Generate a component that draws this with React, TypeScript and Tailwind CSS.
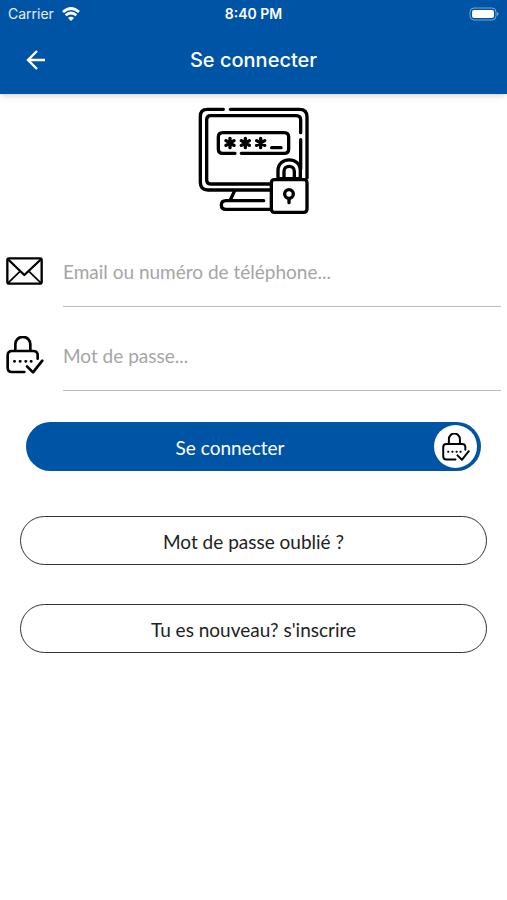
import React from 'react';

interface Field {
    id: string;
    type: string;
    placeholder: string;
    icon: React.ReactNode;
}

const LockCheckIcon: React.FC<{ className?: string }> = ({ className }) => (
    <svg className={className} viewBox="20 272 112 114" fill="none" stroke="black" strokeWidth="8" strokeLinecap="round" strokeLinejoin="round" aria-hidden="true">
        <path d="M47 315v-18a22 22 0 0 1 45 0v18" />
        <path d="M74 380H37q-13 0-13-13v-37q0-13 13-13h64q13 0 13 13v10" />
        <path d="M82 363l18 18 28-35" />
        <path d="M44 348h1M61 348h1M78 348h1M94 348h1" />
    </svg>
);

const MailIcon: React.FC = () => (
    <svg className="h-7 w-[37px]" viewBox="21 33 111 84" fill="none" stroke="black" strokeWidth="7" strokeLinejoin="round" aria-hidden="true">
        <rect x="25" y="37" width="103" height="76" rx="5" />
        <path d="M26 39l50 48 51-48" />
        <path d="M26 112l37-36M127 112L90 76" strokeWidth="5" />
    </svg>
);

const ComputerIcon: React.FC = () => (
    <svg className="h-[107px] w-[111px]" viewBox="25 27 333 321" fill="none" stroke="black" strokeWidth="10" strokeLinecap="round" strokeLinejoin="round" aria-hidden="true">
        {/* screen */}
        <path d="M101 34H53q-21 0-21 21v198q0 23 23 23h185" />
        <path d="M122 34h207q23 0 23 22v184" />
        <path d="M333 104V66q0-13-13-13H63q-12 0-12 12v181q0 12 12 12h176" />
        <path d="M333 125v88" />
        {/* stand */}
        <path d="M134 280l-12 26M222 308H109q-14 0-14 13t14 13h130" />
        {/* password box */}
        <path d="M136 166h-37q-13 0-13-13v-36q0-13 13-13h185q13 0 13 13v36q0 13-13 13H155" />
        <path d="M121 121v28M109 128l24 14M133 128l-24 14M167 121v28M155 128l24 14M179 128l-24 14M213 121v28M201 128l24 14M225 128l-24 14" />
        <path d="M246 149h28" />
        {/* padlock */}
        <path d="M265 242v-24c0-43 67-43 67 0v24z" fill="white" />
        <path d="M283 242v-22c0-20 31-20 31 0v22" />
        <rect x="245" y="245" width="107" height="98" rx="9" fill="white" />
        <circle cx="298" cy="288" r="13" />
        <path d="M298 302v12" />
    </svg>
);

const fields: Field[] = [
    { id: 'email', type: 'text', placeholder: 'Email ou numéro de téléphone...', icon: <MailIcon /> },
    { id: 'password', type: 'password', placeholder: 'Mot de passe...', icon: <LockCheckIcon className="h-[38px] w-[38px]" /> },
];

const outlineButton = 'h-[49px] rounded-full border border-[#333] pt-1 text-[19px] text-[#222]';

const Header: React.FC = () => (
    <header className="bg-[#0054a6] text-white shadow-md font-[Inter,sans-serif]">
        {/* Status bar */}
        <div className="grid h-7 grid-cols-3 items-center px-2 text-sm">
            <div className="flex items-center gap-2 text-white/90">
                <span>Carrier</span>
                <svg className="h-[14px] w-[18px]" viewBox="0 0 54 42" fill="none" stroke="white" strokeWidth="8" aria-hidden="true">
                    <path d="M3 15q24-21 48 0M11 25q16-14 32 0" />
                    <path d="M18 33q9-8 18 0l-9 9z" fill="white" stroke="none" />
                </svg>
            </div>
            <span className="text-center font-semibold">8:40 PM</span>
            <svg className="h-[14px] w-[30px] justify-self-end" viewBox="0 0 30 14" aria-hidden="true">
                <rect x="1" y="1" width="26" height="12" rx="4" fill="none" stroke="#7aa5d1" />
                <rect x="3" y="3" width="22" height="8" rx="2" fill="white" />
                <path d="M28 5q3 2 0 4z" fill="#7aa5d1" />
            </svg>
        </div>
        {/* Title bar */}
        <div className="grid h-[66px] grid-cols-[40px_1fr_40px] items-center px-4 pb-0.5">
            <button type="button" aria-label="Retour" className="flex h-10 items-center justify-center">
                <svg className="h-5 w-5" viewBox="0 0 20 20" fill="none" stroke="currentColor" strokeWidth="2.4" aria-hidden="true">
                    <path d="M19 10H2M11 1l-9 9 9 9" />
                </svg>
            </button>
            <h1 className="text-center text-xl font-medium">Se connecter</h1>
        </div>
    </header>
);

const App: React.FC = () => {
    return (
        <div className="min-h-screen bg-white font-[Lato,sans-serif]">
            <Header />
            <main className="pt-[13px]">
                <div className="flex justify-center">
                    <ComputerIcon />
                </div>
                <form className="pt-[9px]" onSubmit={(e) => e.preventDefault()}>
                    {fields.map((field) => (
                        <div key={field.id} className="flex h-[84px] items-end px-1.5">
                            <label htmlFor={field.id} aria-label={field.placeholder} className="flex h-[72px] w-[57px] items-center">
                                {field.icon}
                            </label>
                            <input
                                id={field.id}
                                type={field.type}
                                placeholder={field.placeholder}
                                className="h-[72px] min-w-0 flex-1 border-b border-[#bbb] pt-0.5 text-[19px] outline-none placeholder:text-[#a5a5a5]"
                            />
                        </div>
                    ))}
                    <div className="mt-[31px] px-[26px]">
                        <button type="submit" className="flex h-[49px] w-full items-center rounded-full bg-[#0054a6] pr-1 text-[19px] text-white">
                            <span className="flex-1 pt-1">Se connecter</span>
                            <span className="flex h-[43px] w-[43px] items-center justify-center rounded-full bg-white">
                                <LockCheckIcon className="h-7 w-7" />
                            </span>
                        </button>
                    </div>
                </form>
                <div className="mt-[45px] flex flex-col gap-[39px] px-5">
                    <button type="button" className={outlineButton}>Mot de passe oublié ?</button>
                    <button type="button" className={outlineButton}>Tu es nouveau? s'inscrire</button>
                </div>
            </main>
        </div>
    );
};

export default App;
